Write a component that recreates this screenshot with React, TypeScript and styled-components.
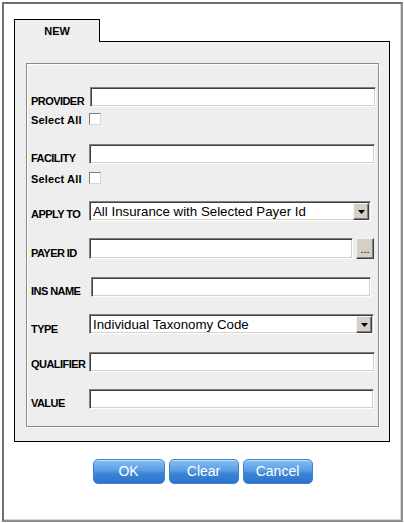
import React from "react";
import styled, { createGlobalStyle } from "styled-components";

const Global = createGlobalStyle`
  html, body { margin: 0; padding: 0; background: #ffffff; }
  body { font-family: "Liberation Sans", Arial, sans-serif; }
  * { box-sizing: border-box; }
`;

const Frame = styled.div`
  margin: 2px 0 0 2px;
  width: 401px;
  height: 520px;
  border-left: 2px solid #6f6f6f;
  border-top: 2px solid #6f6f6f;
  border-right: 2px solid #8e8e8e;
  border-bottom: 2px solid #8e8e8e;
  box-shadow: inset -1px -1px 0 #d6d6d6;
  padding: 15px 0 0 10px;
`;

const TabStrip = styled.div`
  display: flex;
  position: relative;
  z-index: 1;
`;

const Tab = styled.div`
  width: 86px;
  height: 23px;
  margin-bottom: -1px;
  background: #eeeeee;
  border: 1px solid #000;
  border-bottom: none;
  text-align: center;
  padding-top: 6px;
  font: bold 11px/11px "Liberation Sans", Arial, sans-serif;
  letter-spacing: -0.1px;
  color: #000;
`;

const Panel = styled.div`
  width: 376px;
  height: 401px;
  background: #eeeeee;
  border: 1px solid #000;
  padding: 21px 10px 0 11px;
`;

const FieldSet = styled.div`
  width: 353px;
  height: 364px;
  border: 1px solid #8a8a8a;
  box-shadow: inset 1px 1px 0 #ffffff, 1px 1px 0 #ffffff;
  padding: 23px 0 0 4px;
  display: flex;
  flex-direction: column;
`;

const Row = styled.div<{ $top: number; $h: number }>`
  display: flex;
  align-items: flex-end;
  margin-top: ${(p) => p.$top}px;
  height: ${(p) => p.$h}px;
`;

const Label = styled.div<{ $lift?: number; $tight?: boolean }>`
  width: 58px;
  flex: none;
  font: bold 11px/11px "Liberation Sans", Arial, sans-serif;
  letter-spacing: ${(p) => (p.$tight ? "-0.55px" : "0.15px")};
  color: #000;
  white-space: nowrap;
  margin-bottom: ${(p) => p.$lift ?? 0}px;
`;

const Sunken = styled.div<{ $w: number; $shift?: number; $h?: number }>`
  width: ${(p) => p.$w}px;
  height: ${(p) => p.$h ?? 20}px;
  margin-left: ${(p) => p.$shift ?? 0}px;
  background: #ffffff;
  border: 1px solid;
  border-color: #808080 #ffffff #ffffff #808080;
  box-shadow: inset 1px 1px 0 #404040, inset -1px -1px 0 #d4d0c8;
`;

const SelectBox = styled(Sunken)`
  display: flex;
  align-items: center;
  padding: 2px 1px 1px 3px;
  font: 13.3px/16px "Liberation Sans", Arial, sans-serif;
  color: #000;
`;

const SelectText = styled.span`
  flex: 1;
  white-space: nowrap;
  overflow: hidden;
`;

const Raised = styled.div`
  background: #d4d0c8;
  border: 1px solid;
  border-color: #f4f4f4 #404040 #404040 #f4f4f4;
  box-shadow: inset -1px -1px 0 #808080;
`;

const ArrowButton = styled(Raised)`
  width: 16px;
  height: 17px;
  display: flex;
  align-items: center;
  justify-content: center;
  flex: none;
`;

const DotsButton = styled(Raised)`
  width: 18px;
  height: 21px;
  margin-left: 3px;
  display: flex;
  align-items: flex-end;
  justify-content: center;
  font: 11px/11px "Liberation Sans", Arial, sans-serif;
  color: #000;
  padding-bottom: 3px;
`;

const Check = styled.div`
  width: 12px;
  height: 12px;
  background: #ffffff;
  border: 1px solid;
  border-color: #808080 #d8d8d8 #d8d8d8 #808080;
`;

const Buttons = styled.div`
  display: flex;
  justify-content: center;
  gap: 4px;
  margin: 17px 0 0 -10px;
`;

const BlueButton = styled.button<{ $w: number }>`
  width: ${(p) => p.$w}px;
  height: 25px;
  padding: 0;
  border: 1px solid #3f80cc;
  border-radius: 5px;
  background: linear-gradient(to bottom, #86bff2 0%, #5a9de5 45%, #3a84d6 60%, #2d74c8 100%);
  box-shadow: inset 0 1px 0 rgba(255, 255, 255, 0.45);
  color: #ffffff;
  font: 14px/23px "Liberation Sans", Arial, sans-serif;
  text-align: center;
`;

const Arrow = () => (
  <svg width="7" height="4" viewBox="0 0 7 4">
    <path d="M0 0H7L3.5 4Z" fill="#000" />
  </svg>
);

export default function App() {
  return (
    <>
      <Global />
      <Frame>
        <TabStrip>
          <Tab>NEW</Tab>
        </TabStrip>
        <Panel>
          <FieldSet>
            <Row $top={0} $h={20}>
              <Label $tight>PROVIDER</Label>
              <Sunken $w={286} $shift={1} />
            </Row>
            <Row $top={6} $h={12}>
              <Label $lift={-1}>Select All</Label>
              <Check />
            </Row>
            <Row $top={19} $h={20}>
              <Label $tight>FACILITY</Label>
              <Sunken $w={286} />
            </Row>
            <Row $top={8} $h={12}>
              <Label $lift={-1}>Select All</Label>
              <Check />
            </Row>
            <Row $top={17} $h={20}>
              <Label $tight $lift={1}>APPLY TO</Label>
              <SelectBox $w={282}>
                <SelectText>All Insurance with Selected Payer Id</SelectText>
                <ArrowButton>
                  <Arrow />
                </ArrowButton>
              </SelectBox>
            </Row>
            <Row $top={17} $h={21}>
              <Label $tight>PAYER ID</Label>
              <Sunken $w={264} $h={21} />
              <DotsButton>...</DotsButton>
            </Row>
            <Row $top={18} $h={20}>
              <Label $tight>INS NAME</Label>
              <Sunken $w={280} $shift={2} />
            </Row>
            <Row $top={17} $h={20}>
              <Label $tight $lift={-1}>TYPE</Label>
              <SelectBox $w={285}>
                <SelectText>Individual Taxonomy Code</SelectText>
                <ArrowButton>
                  <Arrow />
                </ArrowButton>
              </SelectBox>
            </Row>
            <Row $top={18} $h={20}>
              <Label $tight $lift={2}>QUALIFIER</Label>
              <Sunken $w={286} />
            </Row>
            <Row $top={17} $h={20}>
              <Label $tight>VALUE</Label>
              <Sunken $w={285} />
            </Row>
          </FieldSet>
        </Panel>
        <Buttons>
          <BlueButton $w={72}>OK</BlueButton>
          <BlueButton $w={70}>Clear</BlueButton>
          <BlueButton $w={70}>Cancel</BlueButton>
        </Buttons>
      </Frame>
    </>
  );
}
